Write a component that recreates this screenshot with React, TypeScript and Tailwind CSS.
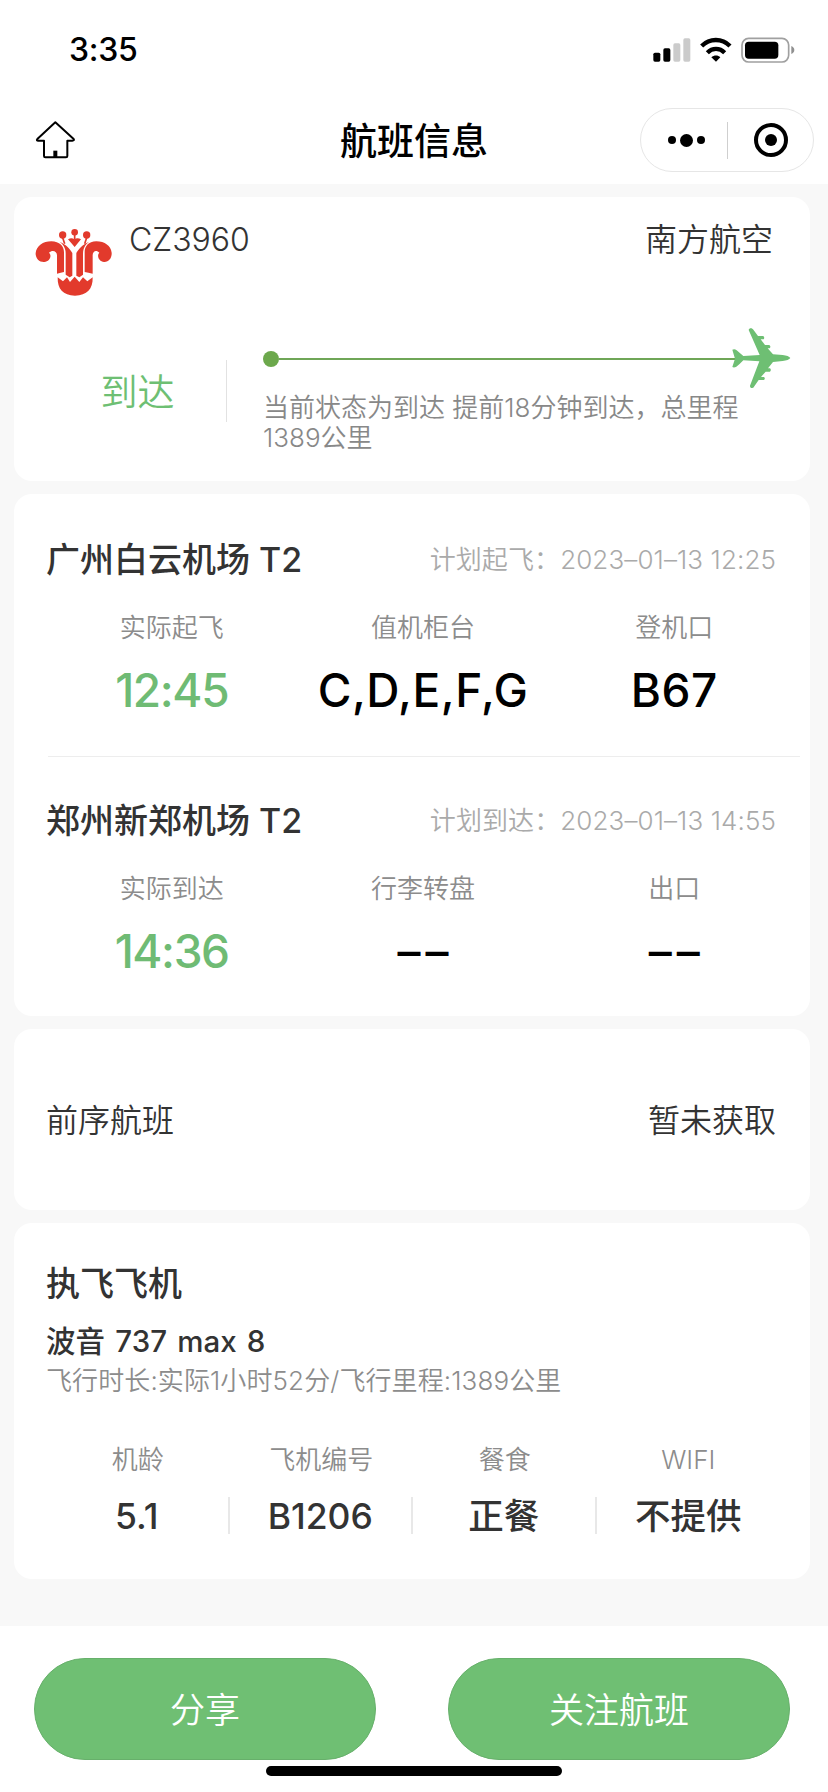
import React from 'react';

interface StatItem {
  label: string;
  value: string;
  type?: 'time' | 'empty';
}

interface AirportSectionProps {
  name: string;
  plan: string;
  stats: StatItem[];
}

const departure: StatItem[] = [
  { label: '实际起飞', value: '12:45', type: 'time' },
  { label: '值机柜台', value: 'C,D,E,F,G' },
  { label: '登机口', value: 'B67' },
];

const arrival: StatItem[] = [
  { label: '实际到达', value: '14:36', type: 'time' },
  { label: '行李转盘', value: '––', type: 'empty' },
  { label: '出口', value: '––', type: 'empty' },
];

const aircraft: StatItem[] = [
  { label: '机龄', value: '5.1' },
  { label: '飞机编号', value: 'B1206' },
  { label: '餐食', value: '正餐' },
  { label: 'WIFI', value: '不提供' },
];

const valueStyles = {
  time: 'text-[#6fbb74] tracking-[-1.4px]',
  empty: 'text-black tracking-[5px] pl-[5px]',
  text: 'text-black tracking-[0.5px]',
};

function StatusIcons() {
  return (
    <svg className="h-[32px] w-[147px]" viewBox="710 100 441 96">
      <rect x="717" y="156" width="21" height="27" rx="5" />
      <rect x="747" y="143" width="21" height="40" rx="5" />
      <rect x="777" y="128" width="21" height="55" rx="5" fill="#cbcbcb" />
      <rect x="807" y="113" width="21" height="70" rx="5" fill="#cbcbcb" />
      <g fill="none" stroke="#000" strokeWidth="13">
        <path d="M862 136 C886 112 923 112 947 136" />
        <path d="M879 156 C894 141 916 141 931 156" />
      </g>
      <path d="M891 170 C899 163 911 163 918 170 L905 183 Z" />
      <rect x="983" y="113" width="140" height="71" rx="20" fill="none" stroke="#a0a0a0" strokeWidth="5" />
      <rect x="992" y="123" width="100" height="51" rx="11" />
      <path d="M1131 136 C1143 141 1143 155 1131 160 Z" fill="#909090" />
    </svg>
  );
}

function HomeIcon() {
  return (
    <svg className="ml-[20px] h-[42px] w-[44px]" viewBox="104 358 132 126" fill="none" stroke="#000" strokeWidth="6" strokeLinejoin="round">
      <path d="M168 368 L223 418 Q226 423 219 423 L204 423 V469 Q204 473 200 473 H138 Q134 473 134 469 V423 H117 Q110 423 114 418 Z" />
      <path d="M168 453 V473" strokeWidth="12" />
    </svg>
  );
}

function AirlineLogo() {
  return (
    <svg className="h-[71px] w-[82px]" viewBox="100 140 246 213">
      <g fill="#e23a2c">
        <path d="M174 291 L190 303 L202 291 L211 305 L225 289 L239 305 L250 291 L263 303 L279 291 C280 326 262 346 226 346 C190 346 173 326 174 291 Z" />
        <path d="M172 280 V225 C172 212 158 207 148 217 C158 226 150 244 134 245 C118 246 107 233 108 218 C110 197 130 183 155 183 C180 184 193 197 193 216 V275 Q184 277 172 280 Z" />
        <path d="M279 280 V225 C279 212 290 207 299 217 C290 226 298 244 313 245 C328 246 337 232 336 217 C334 197 315 183 290 183 C266 184 255 198 255 216 V275 Q266 277 279 280 Z" />
        <path d="M180 184 C200 193 211 205 218 218 V286 L210 291 L198 283 V220 C198 204 192 194 180 184 Z" />
        <path d="M268 184 C248 193 237 205 230 218 V286 L239 291 L250 283 V220 C250 204 256 194 268 184 Z" />
        <path d="M205 177 Q216 171 224 177 Q233 171 244 177 L225 200 Z" />
        <circle cx="189" cy="164" r="11" />
        <circle cx="225" cy="156" r="10" />
        <circle cx="261" cy="164" r="11" />
      </g>
      <g fill="none" stroke="#e23a2c" strokeWidth="5">
        <path d="M189 172 L195 190" />
        <path d="M225 164 V178" />
        <path d="M261 172 L255 190" />
      </g>
    </svg>
  );
}

function PlaneIcon() {
  return (
    <svg className="h-[65px] w-[63px]" viewBox="950 440 189 195" fill="#6ebf73">
      <path d="M1006 452 C1007 445 1016 445 1019 450 L1034 470 H1050 Q1055 475 1051 480 H1042 L1055 497 H1068 Q1074 502 1069 507 H1063 L1079 525 L1108 527 Q1126 529 1131 536 Q1126 543 1108 545 L1079 548 L1064 567 H1070 Q1075 572 1070 577 H1057 L1043 593 H1052 Q1057 598 1052 602 H1036 L1022 622 C1018 629 1009 627 1010 619 L1038 546 L990 543 Q978 556 969 562 Q962 566 957 563 L965 538 L957 511 Q964 508 970 513 L990 530 L1039 527 Z" />
    </svg>
  );
}

function AirportSection({ name, plan, stats }: AirportSectionProps) {
  return (
    <section>
      <div className="flex h-[50px] items-center justify-between pr-[34px] pl-[32px]">
        <h2 className="text-[34px] leading-[50px] font-medium text-[#333]">{name}</h2>
        <span className="text-[26px] leading-[50px] font-[350] tracking-[0.1px] text-[#aaa]">{plan}</span>
      </div>
      <div className="mt-[24px] grid grid-cols-3 pr-[10px] pl-[32px] text-center">
        {stats.map((item) => (
          <div key={item.label}>
            <div className="text-[26px] leading-[38px] font-[350] text-[#8c8c8c]">{item.label}</div>
            <div className={`mt-[13px] h-[53px] text-[46px] leading-[60px] font-[550] ${valueStyles[item.type ?? 'text']}`}>
              {item.value}
            </div>
          </div>
        ))}
      </div>
    </section>
  );
}

export default function App() {
  return (
    <div className="flex h-[1792px] w-[828px] flex-col overflow-hidden bg-[#f8f8f8] font-['Inter','Noto_Sans_CJK_SC',sans-serif] text-[#333]">
      <header className="h-[184px] bg-white text-black">
        <div className="flex h-[99px] items-center justify-between pr-[30px] pl-[69px]">
          <span className="text-[32px] leading-[40px] font-[550] tracking-[-0.3px]">3:35</span>
          <StatusIcons />
        </div>
        <div className="grid h-[82px] grid-cols-[1fr_auto_1fr] items-center px-[14px]">
          <HomeIcon />
          <h1 className="pt-[3px] text-center text-[37px] leading-[50px] font-medium whitespace-nowrap">航班信息</h1>
          <div className="flex h-[64px] w-[174px] items-center justify-self-end rounded-full border border-[#e6e6e6]">
            <div className="flex w-[86px] items-center justify-center gap-[4px] pl-[4px]">
              <i className="size-[8px] rounded-full bg-black" />
              <i className="size-[13px] rounded-full bg-black" />
              <i className="size-[8px] rounded-full bg-black" />
            </div>
            <div className="h-[37px] w-px bg-[#cfcfcf]" />
            <div className="flex flex-1 justify-center">
              <div className="flex size-[34px] items-center justify-center rounded-full border-[4px] border-black">
                <i className="size-[12px] rounded-full bg-black" />
              </div>
            </div>
          </div>
        </div>
      </header>

      <main className="flex flex-col gap-[13px] pt-[13px] pr-[18px] pl-[14px]">
        <div className="h-[284px] rounded-[18px] bg-white">
          <div className="flex h-[120px] items-start pt-[20px] pr-[37px] pl-[19px]">
            <div className="mt-[10px]">
              <AirlineLogo />
            </div>
            <span className="mt-px ml-[14px] text-[32px] leading-[44px] font-[350]">CZ3960</span>
            <span className="mt-px ml-auto text-[32px] leading-[44px] font-[350]">南方航空</span>
          </div>
          <div className="flex">
            <div className="mt-[43px] flex h-[62px] w-[213px] items-center justify-center border-r border-[#e2e2e2] pt-[3px] pl-[35px] text-[37px] leading-[62px] font-[350] text-[#6ebf73]">
              到达
            </div>
            <div className="flex-1 pr-[17px] pl-[36px]">
              <div className="mt-[9px] flex h-[65px] items-center">
                <i className="size-[16px] rounded-full bg-[#6ca84c]" />
                <div className="-mr-[6px] h-[2px] flex-1 bg-[#6fa657]" />
                <PlaneIcon />
              </div>
              <p className="mt-[2px] w-[490px] text-[26px] leading-[30px] font-[350] text-[#888]">
                当前状态为到达 提前18分钟到达，总里程1389公里
              </p>
            </div>
          </div>
        </div>

        <div className="h-[522px] rounded-[18px] bg-white pt-[41px]">
          <AirportSection name="广州白云机场 T2" plan="计划起飞：2023–01–13 12:25" stats={departure} />
          <div className="mt-[43px] mr-[10px] ml-[34px] h-px bg-[#ededed]" />
          <div className="h-[39px]" />
          <AirportSection name="郑州新郑机场 T2" plan="计划到达：2023–01–13 14:55" stats={arrival} />
        </div>

        <div className="flex h-[181px] items-center justify-between rounded-[18px] bg-white pt-[3px] pr-[34px] pl-[32px] text-[32px] font-[350]">
          <span>前序航班</span>
          <span>暂未获取</span>
        </div>

        <div className="h-[356px] rounded-[18px] bg-white pt-[36px]">
          <div className="pl-[32px]">
            <h2 className="text-[34px] leading-[50px] font-medium">执飞飞机</h2>
            <div className="mt-[11px] text-[29.5px] leading-[42px] font-medium tracking-[0.1px] [word-spacing:2px]">波音 737 max 8</div>
            <div className="text-[26px] leading-[38px] font-[350] tracking-[0.1px] text-[#8c8c8c]">飞行时长:实际1小时52分/飞行里程:1389公里</div>
          </div>
          <div className="mt-[41px] grid grid-cols-4 pr-[30px] pl-[32px] text-center">
            {aircraft.map((item, i) => (
              <div key={item.label}>
                <div className="text-[26px] leading-[38px] font-[350] text-[#8c8c8c]">{item.label}</div>
                <div
                  className={`mt-[18px] h-[37px] text-[35.5px] leading-[40px] font-medium ${
                    i < 3 ? 'border-r-2 border-[#e8e8e8]' : ''
                  }`}
                >
                  {item.value}
                </div>
              </div>
            ))}
          </div>
        </div>
      </main>

      <footer className="mt-auto flex h-[166px] flex-col items-center bg-white pt-[32px]">
        <div className="flex gap-[72px] pr-[4px] text-[35px] font-[350] text-white">
          <button className="h-[102px] w-[342px] rounded-full border border-[#67b06b] bg-[#6fbf73] pt-[2px]">分享</button>
          <button className="h-[102px] w-[342px] rounded-full border border-[#67b06b] bg-[#6fbf73] pt-[2px]">关注航班</button>
        </div>
        <div className="mt-[6px] h-[10px] w-[296px] rounded-full bg-black" />
      </footer>
    </div>
  );
}
